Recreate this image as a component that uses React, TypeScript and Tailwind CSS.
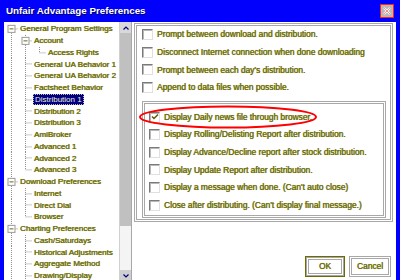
import React from "react";

type Cell = "pipe" | "tee" | "ell" | "root";

interface TreeRow {
	label: string;
	cells: Cell[];
	box?: boolean;
	selected?: boolean;
}

const ROW_H = 11.75;

const treeRows: TreeRow[] = [
	{ label: "General Program Settings", cells: ["root"], box: true },
	{ label: "Account", cells: ["pipe", "tee"], box: true },
	{ label: "Access Rights", cells: ["pipe", "pipe", "ell"] },
	{ label: "General UA Behavior 1", cells: ["pipe", "tee"] },
	{ label: "General UA Behavior 2", cells: ["pipe", "tee"] },
	{ label: "Factsheet Behavior", cells: ["pipe", "tee"] },
	{ label: "Distribution 1", cells: ["pipe", "tee"], selected: true },
	{ label: "Distribution 2", cells: ["pipe", "tee"] },
	{ label: "Distribution 3", cells: ["pipe", "tee"] },
	{ label: "AmiBroker", cells: ["pipe", "tee"] },
	{ label: "Advanced 1", cells: ["pipe", "tee"] },
	{ label: "Advanced 2", cells: ["pipe", "tee"] },
	{ label: "Advanced 3", cells: ["pipe", "ell"] },
	{ label: "Download Preferences", cells: ["tee"], box: true },
	{ label: "Internet", cells: ["pipe", "tee"] },
	{ label: "Direct Dial", cells: ["pipe", "tee"] },
	{ label: "Browser", cells: ["pipe", "ell"] },
	{ label: "Charting Preferences", cells: ["tee"], box: true },
	{ label: "Cash/Saturdays", cells: ["pipe", "tee"] },
	{ label: "Historical Adjustments", cells: ["pipe", "tee"] },
	{ label: "Aggregate Method", cells: ["pipe", "tee"] },
	{ label: "Drawing/Display", cells: ["pipe", "tee"] },
];

const topOptions = [
	{ label: "Prompt between download and distribution.", checked: false },
	{ label: "Disconnect Internet connection when done downloading", checked: false },
	{ label: "Prompt between each day's distribution.", checked: false },
	{ label: "Append to data files when possible.", checked: false },
];

const groupOptions = [
	{ label: "Display Daily news file through browser.", checked: true },
	{ label: "Display Rolling/Delisting Report after distribution.", checked: false },
	{ label: "Display Advance/Decline report after stock distribution.", checked: false },
	{ label: "Display Update Report after distribution.", checked: false },
	{ label: "Display a message when done. (Can't auto close)", checked: false },
	{ label: "Close after distributing. (Can't display final message.)", checked: false },
];

// olive text with the grey halo the screenshot has round every glyph
const oliveText =
	"whitespace-nowrap text-[#727200] [text-shadow:0.35px_0_0_#727200,0_0_1px_#b8b8b8]";

function TreeCell({ kind, box, last }: { kind: Cell; box: boolean; last: boolean }) {
	const mid = ROW_H / 2;
	const dash = "1 1";
	return (
		<svg className="shrink-0" width={14} height={ROW_H} viewBox={`0 0 14 ${ROW_H}`}>
			{kind === "pipe" && <line x1={7.5} y1={0} x2={7.5} y2={ROW_H} stroke="#909090" strokeDasharray={dash} />}
			{(kind === "tee" || kind === "ell") && (
				<line x1={7.5} y1={0} x2={7.5} y2={kind === "tee" ? ROW_H : mid} stroke="#909090" strokeDasharray={dash} />
			)}
			{kind === "root" && <line x1={7.5} y1={mid} x2={7.5} y2={ROW_H} stroke="#909090" strokeDasharray={dash} />}
			{last && kind !== "pipe" && <line x1={7.5} y1={mid} x2={14} y2={mid} stroke="#909090" strokeDasharray={dash} />}
			{box && (
				<g>
					<rect x={4} y={mid - 3.5} width={7} height={7} fill="#ffffff" stroke="#9a9a9a" />
					<line x1={5.5} y1={mid} x2={9.5} y2={mid} stroke="#6b6b00" />
				</g>
			)}
		</svg>
	);
}

function Checkbox({ checked }: { checked: boolean }) {
	return (
		<div className="flex h-[11px] w-[11px] shrink-0 items-center justify-center border border-t-[#7a7a7a] border-l-[#7a7a7a] border-r-[#e0e0e0] border-b-[#e0e0e0] bg-white shadow-[inset_1px_1px_0_#b8b8b8]">
			{checked && (
				<svg width={8} height={8} viewBox="0 0 8 8">
					<path d="M1 3.5 L3 5.5 L7 1.5" fill="none" stroke="#5a5a00" strokeWidth={1.5} />
				</svg>
			)}
		</div>
	);
}

function OptionRow({ label, checked }: { label: string; checked: boolean }) {
	return (
		<div className="flex h-[17.6px] items-center gap-[4px]">
			<Checkbox checked={checked} />
			<span className={`text-[8.4px] ${oliveText}`}>{label}</span>
		</div>
	);
}

export default function App() {
	return (
		<div className="relative flex h-[280px] w-[400px] flex-col overflow-hidden bg-[#0000fc] font-['Liberation_Sans',Arial,sans-serif]">
			<div className="flex h-[22px] shrink-0 items-center justify-between pl-[6px] pr-[6px]">
				<span className="text-[9.8px] font-bold text-white [text-shadow:1px_1px_0_#00005a]">
					Unfair Advantage Preferences
				</span>
				<div className="flex h-[14px] w-[14px] items-center justify-center border border-[#ff2020] bg-[#b8b8b8]">
					<svg width={10} height={10} viewBox="0 0 10 10">
						<path d="M2 2 L8 8 M8 2 L2 8" stroke="#ffffff" strokeWidth={2} />
						<path d="M2 2 L8 8 M8 2 L2 8" stroke="#e04040" strokeWidth={0.6} />
					</svg>
				</div>
			</div>

			<div className="mx-[4px] mb-[4px] flex flex-1 bg-white">
				<div className="flex w-[128px] shrink-0 border-r border-[#a8a8a8]">
					<div className="flex-1 overflow-hidden pt-[1px]">
						{treeRows.map((row) => (
							<div key={row.label} className="flex items-center" style={{ height: ROW_H }}>
								{row.cells.map((c, i) => (
									<TreeCell
										key={i}
										kind={c}
										box={!!row.box && i === row.cells.length - 1}
										last={i === row.cells.length - 1}
									/>
								))}
								<span
									className={
										row.selected
											? "ml-[1px] whitespace-nowrap border border-dotted border-[#c0c0a0] bg-[#000080] px-[1px] text-[8px] leading-[9px] text-[#f0f0d0]"
											: `ml-[2px] text-[8px] leading-[9px] ${oliveText}`
									}
								>
									{row.label}
								</span>
							</div>
						))}
					</div>
					<div className="flex w-[12px] shrink-0 flex-col border-l border-[#d0d0d0] bg-[#f4f4f4]">
						<div className="flex h-[11px] items-center justify-center bg-[#d8d8d8]">
							<svg width={6} height={4} viewBox="0 0 6 4">
								<path d="M0.5 3.5 L3 1 L5.5 3.5" fill="none" stroke="#000080" strokeWidth={1.2} />
							</svg>
						</div>
						<div className="h-[193px] bg-[#c0c0c0]" />
						<div className="flex-1" />
						<div className="flex h-[12px] items-center justify-center bg-[#cfcfcf]">
							<svg width={6} height={4} viewBox="0 0 6 4">
								<path d="M0.5 0.5 L3 3 L5.5 0.5" fill="none" stroke="#000080" strokeWidth={1.2} />
							</svg>
						</div>
					</div>
				</div>

				<div className="flex flex-1 flex-col pl-[2px] pr-[3px] pt-[1px]">
					<div className="h-[199px] border-[3px] border-double border-[#a8a8a8] pl-[5px] pr-[4px]">
						{topOptions.map((o) => (
							<OptionRow key={o.label} {...o} />
						))}
						<div className="mt-[5px] border-[3px] border-double border-[#a8a8a8] pb-[1px] pl-[4px] pt-[4px]">
							{groupOptions.map((o) => (
								<OptionRow key={o.label} {...o} />
							))}
						</div>
					</div>
					<div className="flex flex-1 items-end justify-end gap-[4px] pb-[5px] pr-[2px]">
						<button className="flex h-[21px] w-[40px] items-center justify-center border border-[#6b6b00] bg-white">
							<span className={`flex h-full w-full items-center justify-center border-[3px] border-double border-[#a8a8a8] text-[8.4px] ${oliveText}`}>
								OK
							</span>
						</button>
						<button className={`flex h-[21px] w-[42px] items-center justify-center border-[3px] border-double border-[#a8a8a8] bg-white text-[8.4px] ${oliveText}`}>
							Cancel
						</button>
					</div>
				</div>
			</div>

			<svg className="pointer-events-none absolute left-[138px] top-[105px]" width={180} height={24} viewBox="0 0 180 24">
				<ellipse cx={90} cy={12} rx={88} ry={10.5} fill="none" stroke="#ff0000" strokeWidth={2} />
			</svg>
		</div>
	);
}
